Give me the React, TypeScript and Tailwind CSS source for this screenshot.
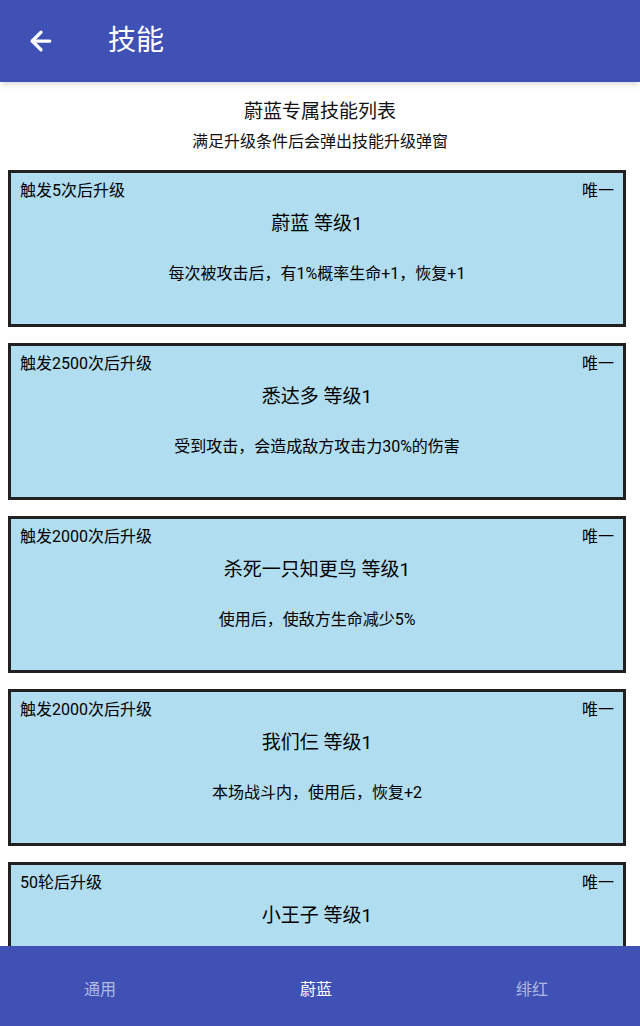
import { ArrowLeft } from 'lucide-react';

const font = { fontFamily: 'Roboto, "Noto Sans CJK SC", sans-serif' };

type Skill = { trigger: string; title: string; desc: string };

const skills: Skill[] = [
  { trigger: '触发5次后升级', title: '蔚蓝 等级1', desc: '每次被攻击后，有1%概率生命+1，恢复+1' },
  { trigger: '触发2500次后升级', title: '悉达多 等级1', desc: '受到攻击，会造成敌方攻击力30%的伤害' },
  { trigger: '触发2000次后升级', title: '杀死一只知更鸟 等级1', desc: '使用后，使敌方生命减少5%' },
  { trigger: '触发2000次后升级', title: '我们仨 等级1', desc: '本场战斗内，使用后，恢复+2' },
  { trigger: '50轮后升级', title: '小王子 等级1', desc: '' },
];

function SkillCard({ skill }: { skill: Skill }) {
  return (
    <div className="h-[157px] shrink-0 border-[3px] border-[#212121] bg-[#b1ddf0] px-[9px] pt-2 text-black">
      <div className="flex justify-between text-[16px] leading-5">
        <span>{skill.trigger}</span>
        <span>唯一</span>
      </div>
      <div className="mt-[11px] text-center text-[19px] leading-6">{skill.title}</div>
      {skill.desc && <div className="mt-7 text-center text-[16px] leading-5">{skill.desc}</div>}
    </div>
  );
}

export default function App() {
  const tabs = ['通用', '蔚蓝', '绯红'];
  return (
    <div className="flex h-screen flex-col overflow-hidden bg-white" style={font}>
      <header className="relative z-10 flex h-[82px] shrink-0 items-center bg-[#3f51b5] shadow-md">
        <ArrowLeft className="ml-[26px] h-[30px] w-[30px] text-white" strokeWidth={2.6} />
        <h1 className="ml-[52px] text-[28px] text-white">技能</h1>
      </header>

      <main className="flex-1 overflow-hidden">
        <div className="pt-[18px] text-center text-[#111]">
          <div className="text-[19px] leading-6">蔚蓝专属技能列表</div>
          <div className="mt-2 text-[16px] leading-5">满足升级条件后会弹出技能升级弹窗</div>
        </div>
        <div className="mt-[18px] flex flex-col gap-4 pl-2 pr-[14px]">
          {skills.map((s, i) => (
            <SkillCard key={i} skill={s} />
          ))}
        </div>
      </main>

      <nav className="h-[80px] shrink-0 overflow-hidden bg-[#3f51b5]">
        <div className="-ml-2 grid h-full w-[648px] grid-cols-3 items-center pt-2 text-[16px]">
          {tabs.map((t, i) => (
            <div key={t} className={`text-center ${i === 1 ? 'text-white' : 'text-white/60'}`}>
              {t}
            </div>
          ))}
        </div>
      </nav>
    </div>
  );
}
